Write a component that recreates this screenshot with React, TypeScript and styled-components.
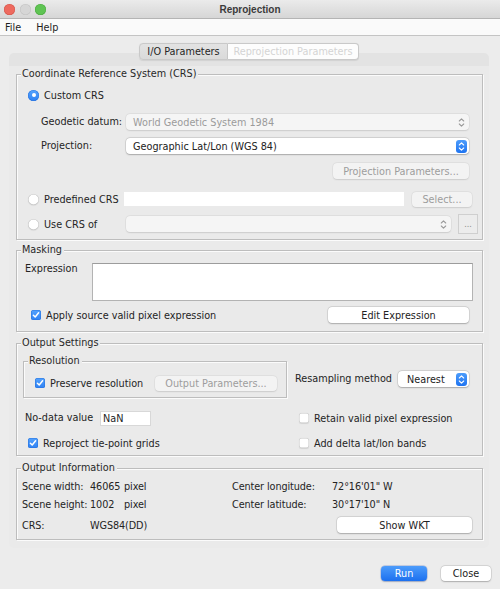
import React from 'react'
import styled, { createGlobalStyle } from 'styled-components'

const GlobalStyle = createGlobalStyle`
  * { box-sizing: border-box; }
  html, body { margin: 0; padding: 0; background: #ececec; }
  body {
    font-family: "DejaVu Sans", "Liberation Sans", sans-serif;
    font-size: 9.7px;
    color: #242424;
  }
`

const Window = styled.div`
  width: 500px;
  height: 589px;
  display: flex;
  flex-direction: column;
  background: #ececec;
  overflow: hidden;
`

const TitleBar = styled.div`
  height: 19px;
  flex: none;
  display: grid;
  grid-template-columns: 1fr auto 1fr;
  align-items: center;
  background: linear-gradient(#ebebeb, #d6d6d6);
  border-bottom: 1px solid #b4b4b4;
`

const Lights = styled.div`
  display: flex;
  gap: 4.5px;
  padding-left: 4px;
`

const Light = styled.span<{ $color: string; $edge: string }>`
  width: 11px;
  height: 11px;
  border-radius: 50%;
  background: ${({ $color }) => $color};
  box-shadow: inset 0 0 0 0.5px ${({ $edge }) => $edge};
`

const Title = styled.div`
  font-family: "Liberation Sans", Arial, sans-serif;
  font-weight: bold;
  font-size: 10px;
  color: #3b3b3b;
`

const MenuBar = styled.div`
  height: 17px;
  flex: none;
  display: flex;
  align-items: center;
  gap: 15px;
  padding-left: 5px;
  background: #fafafa;
  border-bottom: 1px solid #c4c4c4;
`

const MenuItem = styled.span`
  color: #1e1e1e;
`

const TabArea = styled.div`
  margin: 7px 11px 0 9px;
  display: flex;
  flex-direction: column;
`

const TabStrip = styled.div`
  display: flex;
  justify-content: center;
  position: relative;
  z-index: 1;
  margin-bottom: -7px;
`

const Tab = styled.div<{ $active?: boolean; $width: number }>`
  width: ${({ $width }) => $width}px;
  height: 17px;
  display: flex;
  align-items: center;
  justify-content: center;
  background: ${({ $active }) => ($active ? 'linear-gradient(#e3e3e3, #dadada)' : '#fdfdfd')};
  color: ${({ $active }) => ($active ? '#262626' : '#d4d4d4')};
  border: 1px solid #c9c9c9;
  border-radius: ${({ $active }) => ($active ? '4px 0 0 4px' : '0 4px 4px 0')};
  border-left-width: ${({ $active }) => ($active ? '1px' : '0')};
  box-shadow: 0 0.5px 1px rgba(0, 0, 0, 0.08);
`

const Panel = styled.div`
  height: 495px;
  display: flex;
  flex-direction: column;
  padding: 21px 6px 0 7px;
  border-radius: 5px;
  background: linear-gradient(#e3e3e3 0, #e3e3e3 13px, #eaeaea 13px);
`

const GroupBox = styled.div<{ $top?: number; $width?: number; $bottom?: number }>`
  margin-top: ${({ $top }) => $top ?? 0}px;
  width: ${({ $width }) => ($width ? `${$width}px` : 'auto')};
  flex: none;
  padding-bottom: ${({ $bottom }) => $bottom ?? 0}px;
  border: 1px solid #bdbdbd;
  box-shadow: 1px 1px 0 #fbfbfb, inset 1px 1px 0 #fbfbfb;
`

const GroupTitle = styled.div`
  margin: -7px 0 0 4px;
  width: fit-content;
  padding: 0 2px 0 1px;
  line-height: 12px;
  background: #eaeaea;
  color: #282828;
`

const Row = styled.div<{ $top?: number; $height?: number; $left?: number; $right?: number }>`
  display: flex;
  align-items: center;
  height: ${({ $height }) => $height ?? 20}px;
  margin-top: ${({ $top }) => $top ?? 0}px;
  padding-left: ${({ $left }) => $left ?? 0}px;
  padding-right: ${({ $right }) => $right ?? 0}px;
`

const TopRow = styled.div<{ $left?: number; $top?: number }>`
  display: flex;
  align-items: flex-start;
  margin-top: ${({ $top }) => $top ?? 0}px;
  padding-left: ${({ $left }) => $left ?? 0}px;
`

const Label = styled.span<{ $width?: number }>`
  flex: none;
  width: ${({ $width }) => ($width ? `${$width}px` : 'auto')};
  line-height: 12px;
  white-space: nowrap;
`

const Choice = styled.label<{ $width?: number }>`
  flex: none;
  display: flex;
  align-items: center;
  gap: 5px;
  width: ${({ $width }) => ($width ? `${$width}px` : 'auto')};
  white-space: nowrap;
`

const RadioDot = styled.span<{ $checked?: boolean }>`
  width: 11px;
  height: 11px;
  flex: none;
  border-radius: 50%;
  display: flex;
  align-items: center;
  justify-content: center;
  background: ${({ $checked }) => ($checked ? 'linear-gradient(#55a3fd, #2e81f4)' : '#ffffff')};
  box-shadow: ${({ $checked }) =>
    $checked ? 'inset 0 0 0 0.5px #2873dd' : 'inset 0 0 0 0.5px #bdbdbd, 0 0.5px 1px rgba(0,0,0,0.12)'};

  &::after {
    content: '';
    width: 4px;
    height: 4px;
    border-radius: 50%;
    background: #fff;
    display: ${({ $checked }) => ($checked ? 'block' : 'none')};
  }
`

const CheckBox = styled.span<{ $checked?: boolean }>`
  width: 10px;
  height: 10px;
  flex: none;
  border-radius: 2.5px;
  display: flex;
  align-items: center;
  justify-content: center;
  background: ${({ $checked }) => ($checked ? 'linear-gradient(#55a3fd, #2e81f4)' : '#ffffff')};
  box-shadow: ${({ $checked }) =>
    $checked ? 'inset 0 0 0 0.5px #2873dd' : 'inset 0 0 0 0.5px #c4c4c4, 0 0.5px 1px rgba(0,0,0,0.1)'};
`

const Combo = styled.div<{ $width: number; $disabled?: boolean; $pad?: number }>`
  width: ${({ $width }) => $width}px;
  height: 16px;
  flex: none;
  display: flex;
  align-items: center;
  justify-content: space-between;
  padding: 0 2px 0 ${({ $pad }) => $pad ?? 7}px;
  border-radius: 4px;
  background: ${({ $disabled }) => ($disabled ? '#f5f5f5' : '#ffffff')};
  color: ${({ $disabled }) => ($disabled ? '#9b9b9b' : '#222')};
  box-shadow: 0 0 0 0.5px rgba(0, 0, 0, ${({ $disabled }) => ($disabled ? 0.06 : 0.14)}),
    0 0.5px 1.5px rgba(0, 0, 0, ${({ $disabled }) => ($disabled ? 0.1 : 0.22)});
  white-space: nowrap;
`

const Stepper = styled.span<{ $disabled?: boolean }>`
  width: 11px;
  height: 13px;
  flex: none;
  display: flex;
  border-radius: 3px;
  background: ${({ $disabled }) => ($disabled ? 'transparent' : 'linear-gradient(#4c9cfb, #1f74f1)')};
`

const Button = styled.button<{ $width: number; $disabled?: boolean; $height?: number; $gap?: number }>`
  width: ${({ $width }) => $width}px;
  height: ${({ $height }) => $height ?? 16}px;
  flex: none;
  margin-left: ${({ $gap }) => $gap ?? 0}px;
  padding: 0;
  border: none;
  border-radius: 4px;
  font: inherit;
  background: ${({ $disabled }) => ($disabled ? '#f3f3f3' : '#ffffff')};
  color: ${({ $disabled }) => ($disabled ? '#9d9d9d' : '#222')};
  box-shadow: 0 0 0 0.5px rgba(0, 0, 0, ${({ $disabled }) => ($disabled ? 0.05 : 0.13)}),
    0 0.5px 1.5px rgba(0, 0, 0, ${({ $disabled }) => ($disabled ? 0.1 : 0.22)});
`

const PrimaryButton = styled(Button)`
  background: linear-gradient(#4c9cfb, #1c70ef);
  color: #fff;
  box-shadow: 0 0 0 0.5px rgba(0, 60, 200, 0.3), 0 0.5px 1.5px rgba(0, 0, 0, 0.2);
`

const DotsButton = styled.div`
  width: 20px;
  height: 20px;
  flex: none;
  margin-left: 7px;
  display: flex;
  align-items: center;
  justify-content: center;
  border: 1px solid #cfcfcf;
  background: #ececec;
  color: #8a8a8a;
  font-size: 8px;
`

const TextField = styled.div<{ $width: number; $height?: number; $framed?: boolean }>`
  width: ${({ $width }) => $width}px;
  height: ${({ $height }) => $height ?? 14}px;
  flex: none;
  display: flex;
  align-items: center;
  padding-left: 3px;
  background: #fff;
  box-shadow: ${({ $framed }) => ($framed ? 'inset 0 0 0 1px #d8d8d8' : 'none')};
`

const TextArea = styled.div`
  width: 381px;
  height: 38px;
  flex: none;
  background: #fff;
  border: 1px solid #b3b3b3;
  border-top-color: #9c9c9c;
`

const Pushed = styled.div`
  margin-left: auto;
  display: flex;
`

const Cell = styled.div<{ $width?: number; $left?: number }>`
  flex: none;
  display: flex;
  align-items: center;
  width: ${({ $width }) => ($width ? `${$width}px` : 'auto')};
  padding-left: ${({ $left }) => $left ?? 0}px;
`

const SideBlock = styled.div`
  margin: 22px 0 0 8px;
  height: 16px;
  display: flex;
  align-items: center;
`

const InfoGrid = styled.div`
  display: grid;
  grid-template-columns: 68px 34px 108px 100px 1fr;
  grid-template-rows: 18px 18px 24px;
  align-items: center;
  padding: 3px 0 0 5px;
  letter-spacing: -0.1px;
`

const InfoWide = styled.span`
  grid-column: span 2;
`

const InfoButtonCell = styled.div`
  grid-column: 5;
  padding-left: 5px;
  display: flex;
`

const Footer = styled.div`
  margin-top: 18px;
  display: flex;
  justify-content: flex-end;
  gap: 14px;
  padding-right: 9px;
`

const Check = ({ checked }: { checked?: boolean }) => (
  <CheckBox $checked={checked}>
    {checked && (
      <svg width="8" height="8" viewBox="0 0 8 8">
        <polyline points="1.4,4.2 3.2,6 6.6,1.8" fill="none" stroke="#fff" strokeWidth="1.5" strokeLinecap="round" strokeLinejoin="round" />
      </svg>
    )}
  </CheckBox>
)

const Arrows = ({ disabled }: { disabled?: boolean }) => (
  <Stepper $disabled={disabled}>
    <svg width="11" height="13" viewBox="0 0 11 13">
      <path
        d="M3.3 5 L5.5 2.9 L7.7 5 M3.3 8 L5.5 10.1 L7.7 8"
        fill="none"
        stroke={disabled ? '#9a9a9a' : '#ffffff'}
        strokeWidth="1.1"
        strokeLinecap="round"
        strokeLinejoin="round"
      />
    </svg>
  </Stepper>
)

const App: React.FC = () => {
  return (
    <Window>
      <GlobalStyle />
      <TitleBar>
        <Lights>
          <Light $color="#ee6a5f" $edge="#d2554a" />
          <Light $color="#d6d6d6" $edge="#c2c2c2" />
          <Light $color="#5fc453" $edge="#4aa83e" />
        </Lights>
        <Title>Reprojection</Title>
        <span />
      </TitleBar>
      <MenuBar>
        <MenuItem>File</MenuItem>
        <MenuItem>Help</MenuItem>
      </MenuBar>

      <TabArea>
        <TabStrip>
          <Tab $active $width={89}>I/O Parameters</Tab>
          <Tab $width={131}>Reprojection Parameters</Tab>
        </TabStrip>
        <Panel>
          <GroupBox $bottom={5}>
            <GroupTitle>Coordinate Reference System (CRS)</GroupTitle>
            <Row $top={5} $left={11}>
              <Choice>
                <RadioDot $checked />
                Custom CRS
              </Choice>
            </Row>
            <Row $top={7} $left={24}>
              <Label $width={85}>Geodetic datum:</Label>
              <Combo $width={343} $disabled>
                World Geodetic System 1984
                <Arrows disabled />
              </Combo>
            </Row>
            <Row $top={4} $left={24}>
              <Label $width={85}>Projection:</Label>
              <Combo $width={343}>
                Geographic Lat/Lon (WGS 84)
                <Arrows />
              </Combo>
            </Row>
            <Row $top={5} $right={13}>
              <Pushed>
                <Button $width={136} $disabled>Projection Parameters...</Button>
              </Pushed>
            </Row>
            <Row $top={8} $left={11}>
              <Choice $width={96}>
                <RadioDot />
                Predefined CRS
              </Choice>
              <TextField $width={280} />
              <Button $width={60} $height={15} $gap={8} $disabled>
                Select...
              </Button>
            </Row>
            <Row $top={5} $left={11}>
              <Choice $width={98}>
                <RadioDot />
                Use CRS of
              </Choice>
              <Combo $width={325} $disabled>
                <span />
                <Arrows disabled />
              </Combo>
              <DotsButton>...</DotsButton>
            </Row>
          </GroupBox>

          <GroupBox $top={10} $bottom={8}>
            <GroupTitle>Masking</GroupTitle>
            <TopRow $left={8} $top={7}>
              <Label $width={67}>Expression</Label>
              <TextArea />
            </TopRow>
            <Row $top={6} $left={14} $right={13} $height={16}>
              <Choice>
                <Check checked />
                Apply source valid pixel expression
              </Choice>
              <Pushed>
                <Button $width={141}>Edit Expression</Button>
              </Pushed>
            </Row>
          </GroupBox>

          <GroupBox $top={11} $bottom={4}>
            <GroupTitle>Output Settings</GroupTitle>
            <TopRow $left={6}>
              <GroupBox $top={12} $width={264} $bottom={6}>
                <GroupTitle>Resolution</GroupTitle>
                <Row $top={8} $left={11} $right={9} $height={16}>
                  <Choice>
                    <Check checked />
                    Preserve resolution
                  </Choice>
                  <Pushed>
                    <Button $width={122} $height={15} $disabled>Output Parameters...</Button>
                  </Pushed>
                </Row>
              </GroupBox>
              <SideBlock>
                <Label $width={103}>Resampling method</Label>
                <Combo $width={71} $pad={9}>
                  Nearest
                  <Arrows />
                </Combo>
              </SideBlock>
            </TopRow>
            <Row $top={12} $height={16}>
              <Cell $width={282} $left={8}>
                <Label $width={75}>No-data value</Label>
                <TextField $width={51} $height={15} $framed>NaN</TextField>
              </Cell>
              <Choice>
                <Check />
                Retain valid pixel expression
              </Choice>
            </Row>
            <Row $top={9} $height={16}>
              <Cell $width={282} $left={11}>
                <Choice>
                  <Check checked />
                  Reproject tie-point grids
                </Choice>
              </Cell>
              <Choice>
                <Check />
                Add delta lat/lon bands
              </Choice>
            </Row>
          </GroupBox>

          <GroupBox $top={12} $bottom={2}>
            <GroupTitle>Output Information</GroupTitle>
            <InfoGrid>
              <span>Scene width:</span>
              <span>46065</span>
              <span>pixel</span>
              <span>Center longitude:</span>
              <span>72°16'01" W</span>
              <span>Scene height:</span>
              <span>1002</span>
              <span>pixel</span>
              <span>Center latitude:</span>
              <span>30°17'10" N</span>
              <span>CRS:</span>
              <InfoWide>WGS84(DD)</InfoWide>
              <InfoButtonCell>
                <Button $width={135}>Show WKT</Button>
              </InfoButtonCell>
            </InfoGrid>
          </GroupBox>
        </Panel>
      </TabArea>

      <Footer>
        <PrimaryButton $width={46} $height={15}>Run</PrimaryButton>
        <Button $width={50} $height={15}>Close</Button>
      </Footer>
    </Window>
  )
}

export default App
